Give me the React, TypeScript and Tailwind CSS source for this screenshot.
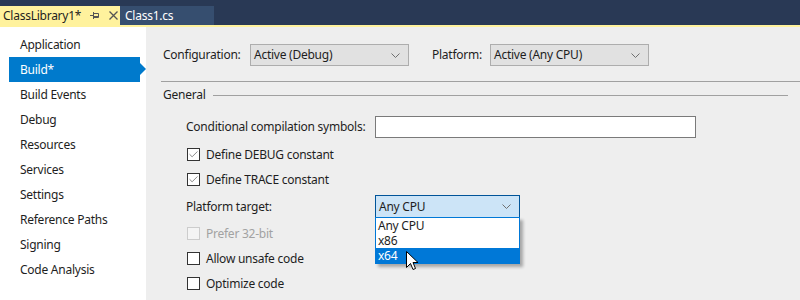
import { Check } from 'lucide-react'

const navItems = [
  'Application',
  'Build*',
  'Build Events',
  'Debug',
  'Resources',
  'Services',
  'Settings',
  'Reference Paths',
  'Signing',
  'Code Analysis',
]

function Chevron() {
  return (
    <svg width="9" height="5" viewBox="0 0 9 5" className="shrink-0">
      <path d="M0.5 0.5 L4.5 4.5 L8.5 0.5" fill="none" stroke="#707070" strokeWidth="1" />
    </svg>
  )
}

function Combo({ value, width }: { value: string; width: string }) {
  return (
    <div
      className={`flex h-[22px] ${width} items-center justify-between border border-[#adadad] bg-[#e1e1e1] pl-[3px] pr-[8px]`}
    >
      <span>{value}</span>
      <Chevron />
    </div>
  )
}

function CheckRow({
  label,
  checked,
  disabled,
}: {
  label: string
  checked?: boolean
  disabled?: boolean
}) {
  return (
    <div className="flex h-[25px] items-center pl-[26px]">
      <span
        className={`flex h-[13px] w-[13px] items-center justify-center border ${
          disabled ? 'border-[#cccccc] bg-[#f4f4f4]' : 'border-[#333333] bg-white'
        }`}
      >
        {checked && <Check className="h-[11px] w-[11px] text-[#555555]" strokeWidth={1.5} />}
      </span>
      <span className={`ml-[6px] ${disabled ? 'text-[#a2a2a2]' : ''}`}>{label}</span>
    </div>
  )
}

export default function App() {
  return (
    <div className="h-[300px] w-[800px] overflow-hidden bg-[#eeeeee] font-['Segoe_UI','Noto_Sans',sans-serif] text-[12px] tracking-[-0.25px] text-[#1e1e1e]">
      {/* document tab well */}
      <div className="flex h-[25px] items-end bg-[#293955]">
        <div className="flex h-[19px] w-[120px] items-center bg-[#fff29d] pl-[3px]">
          <span>ClassLibrary1*</span>
          <svg className="ml-[9px]" width="10" height="9" viewBox="0 0 10 9">
            <path d="M0 4.5 H3.5 M3.5 1 V8 M3.5 2.5 H8.5 V6.5 H3.5 M3.5 5.5 H8.5" fill="none" stroke="#555555" strokeWidth="1" />
          </svg>
          <svg className="ml-[9px]" width="9" height="9" viewBox="0 0 9 9">
            <path d="M0.5 0.5 L8.5 8.5 M8.5 0.5 L0.5 8.5" stroke="#555555" strokeWidth="1.3" />
          </svg>
        </div>
        <div className="flex h-[19px] w-[94px] items-center bg-[#364e6f] pl-[5px] text-white">
          Class1.cs
        </div>
      </div>
      <div className="h-[2px] bg-[#fff29d]" />

      <div className="flex h-[273px]">
        {/* page list */}
        <div className="w-[146px] shrink-0 bg-white pt-[5px]">
          {navItems.map((item) =>
            item === 'Build*' ? (
              <div key={item} className="relative ml-[9px] flex h-[25px] w-[131px] items-center bg-[#007acc] pl-[11px] text-white">
                {item}
                <span className="absolute right-[-6px] top-[6px] h-0 w-0 border-y-[6px] border-l-[6px] border-y-transparent border-l-[#007acc]" />
              </div>
            ) : (
              <div key={item} className="flex h-[25px] items-center pl-[20px]">
                {item}
              </div>
            ),
          )}
        </div>

        {/* build properties */}
        <div className="relative flex-1 pl-[15px] pt-[17px]">
          <div className="flex items-center">
            <span className="ml-[2px] w-[87px]">Configuration:</span>
            <Combo value="Active (Debug)" width="w-[159px]" />
            <span className="ml-[23px] w-[58px]">Platform:</span>
            <Combo value="Active (Any CPU)" width="w-[159px]" />
          </div>

          <div className="mt-[15px] h-px bg-[#a0a0a0]" />

          <div className="mt-[5px] flex h-[16px] items-center pr-[12px]">
            <span className="ml-[2px]">General</span>
            <div className="ml-[8px] h-px flex-1 bg-[#a0a0a0]" />
          </div>

          <div className="mt-[13px] flex items-center pl-[25px]">
            <span className="w-[189px]">Conditional compilation symbols:</span>
            <div className="h-[22px] w-[321px] border border-[#7a7a7a] bg-white" />
          </div>

          <div className="mt-[4px]">
            <CheckRow label="Define DEBUG constant" checked />
            <CheckRow label="Define TRACE constant" checked />
          </div>

          <div className="mt-[3px] flex items-center pl-[25px]">
            <span className="w-[189px]">Platform target:</span>
            <div className="relative">
              <div className="flex h-[23px] w-[145px] items-center justify-between border border-[#005499] bg-[#cce4f7] pl-[3px] pr-[8px]">
                <span>Any CPU</span>
                <Chevron />
              </div>
              {/* open list */}
              <div className="absolute left-0 top-[22px] z-10 w-[145px] border border-[#0078d7] bg-white leading-[15px] shadow-[3px_3px_3px_rgba(0,0,0,0.3)]">
                <div className="h-[15px] pl-[2px]">Any CPU</div>
                <div className="h-[15px] pl-[2px]">x86</div>
                <div className="h-[15px] bg-[#0078d7] pl-[2px] text-white">x64</div>
              </div>
              {/* mouse pointer */}
              <svg
                className="absolute left-[31px] top-[56px] z-20"
                width="13"
                height="21"
                viewBox="0 0 13 21"
              >
                <path
                  d="M0.5 0.5 L0.5 16.5 L4.5 12.5 L7 18.5 L9.5 17.5 L7 11.5 L12 11.5 Z"
                  fill="white"
                  stroke="black"
                  strokeWidth="1"
                  strokeLinejoin="round"
                />
              </svg>
            </div>
          </div>

          <div className="mt-[3px]">
            <CheckRow label="Prefer 32-bit" disabled />
            <CheckRow label="Allow unsafe code" />
            <CheckRow label="Optimize code" />
          </div>
        </div>
      </div>
    </div>
  )
}
